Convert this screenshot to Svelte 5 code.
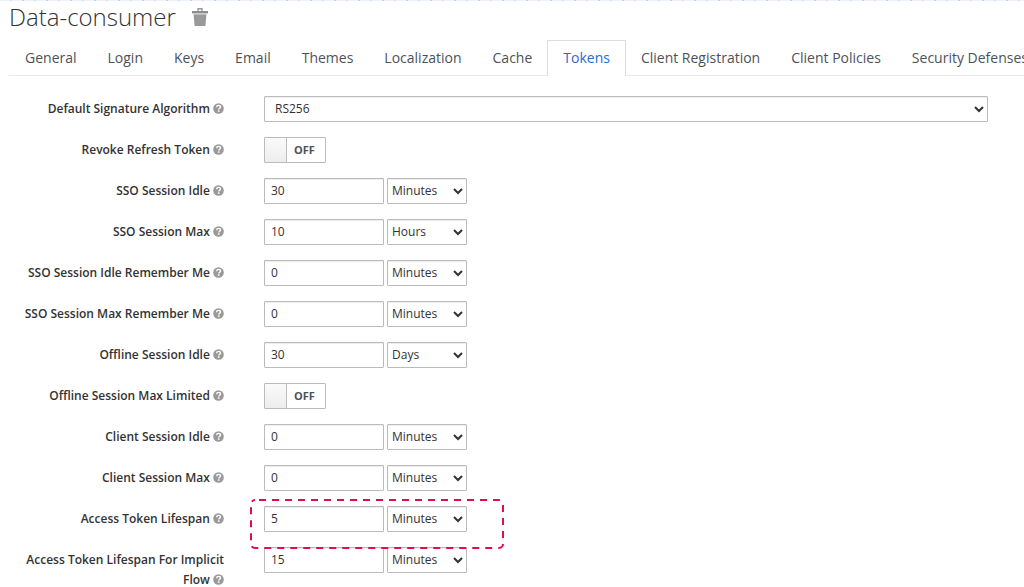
<script>
  const tabs = [
    'General', 'Login', 'Keys', 'Email', 'Themes', 'Localization', 'Cache',
    'Tokens', 'Client Registration', 'Client Policies', 'Security Defenses'
  ];
  const units = ['Minutes', 'Hours', 'Days'];

  let active = $state('Tokens');
  let algorithm = $state('RS256');
  let rows = $state([
    { id: 'revoke', label: 'Revoke Refresh Token', on: false },
    { id: 'sso-idle', label: 'SSO Session Idle', value: '30', unit: 'Minutes' },
    { id: 'sso-max', label: 'SSO Session Max', value: '10', unit: 'Hours' },
    { id: 'sso-idle-rm', label: 'SSO Session Idle Remember Me', value: '0', unit: 'Minutes' },
    { id: 'sso-max-rm', label: 'SSO Session Max Remember Me', value: '0', unit: 'Minutes' },
    { id: 'offline-idle', label: 'Offline Session Idle', value: '30', unit: 'Days' },
    { id: 'offline-limited', label: 'Offline Session Max Limited', on: false },
    { id: 'client-idle', label: 'Client Session Idle', value: '0', unit: 'Minutes' },
    { id: 'client-max', label: 'Client Session Max', value: '0', unit: 'Minutes' },
    { id: 'access', label: 'Access Token Lifespan', value: '5', unit: 'Minutes', marked: true },
    { id: 'implicit', label: 'Access Token Lifespan For Implicit Flow', value: '15', unit: 'Minutes' }
  ]);
</script>

{#snippet help()}
  <svg class="help" viewBox="0 0 11 11" aria-hidden="true">
    <circle cx="5.5" cy="5.5" r="5.3" fill="#999" />
    <path d="M3.6 4.2C3.7 2.9 4.6 2.4 5.6 2.4C6.7 2.4 7.5 3 7.5 4C7.5 5.3 5.7 5.2 5.7 6.6" fill="none" stroke="#fff" stroke-width="1.4" />
    <rect x="4.9" y="7.3" width="1.6" height="1.5" fill="#fff" />
  </svg>
{/snippet}

<main>
  <header>
    <h1>Data-consumer</h1>
    <button class="trash" aria-label="Delete realm">
      <svg viewBox="0 0 16 18" aria-hidden="true">
        <path d="M6 3V0.7H10V3" fill="none" stroke="#999" stroke-width="1.4" />
        <rect x="0" y="3" width="16" height="2.4" fill="#8f8f8f" />
        <path d="M1.5 5.4H14.5V6.6H1.6Z" fill="#c4c4c4" />
        <path d="M1.6 6.6H14.4L13.4 18H2.6Z" fill="#999" />
      </svg>
    </button>
  </header>

  <nav>
    {#each tabs as tab}
      <a href="#{tab}" class:active={active === tab} onclick={() => (active = tab)}>{tab}</a>
    {/each}
  </nav>

  <form>
    <div class="row">
      <label for="algorithm">Default Signature Algorithm {@render help()}</label>
      <select id="algorithm" class="wide" bind:value={algorithm}>
        <option>RS256</option>
        <option>ES256</option>
      </select>
    </div>
    {#each rows as row}
      <div class="row">
        <label for={row.id}>{row.label} {@render help()}</label>
        {#if row.unit}
          <div class="time">
            <input id={row.id} type="text" bind:value={row.value} />
            <select aria-label="{row.label} unit" bind:value={row.unit}>
              {#each units as unit}<option>{unit}</option>{/each}
            </select>
            {#if row.marked}
              <svg class="mark" aria-hidden="true">
                <rect x="1" y="1" rx="4" />
              </svg>
            {/if}
          </div>
        {:else}
          <button type="button" id={row.id} class="switch" class:on={row.on} onclick={() => (row.on = !row.on)}>
            <span class="knob"></span><span class="state">{row.on ? 'ON' : 'OFF'}</span>
          </button>
        {/if}
      </div>
    {/each}
  </form>
</main>

<style>
  :global(body) {
    margin: 0;
    background: #fff;
    overflow-x: hidden;
  }

  main {
    font: 12px/20px "Open Sans", "Noto Sans", sans-serif;
    color: #333;
    padding-left: 9px;
    background: repeating-linear-gradient(90deg, #edf2f8 0 10px, #dde2e8 10px 12px, #edf2f8 12px 22px, #c3cfe2 22px 24px) top / 100% 1px no-repeat;
  }

  header {
    display: flex;
    align-items: center;
    gap: 16px;
    height: 34px;
  }

  h1 {
    margin: 0;
    font-size: 24px;
    font-weight: 300;
    line-height: 34px;
  }

  .trash {
    padding: 0;
    border: 0;
    background: none;
    height: 18px;
  }

  .trash svg {
    display: block;
    width: 16px;
    height: 18px;
  }

  nav {
    display: flex;
    margin-top: 6px;
    border-bottom: 1px solid #e9e9e9;
  }

  nav a {
    flex: none;
    padding: 6px 15px 7px;
    margin: 0 -1px -1px 0;
    border: 1px solid transparent;
    border-bottom: 0;
    font-size: 14px;
    line-height: 22px;
    color: #4d5258;
    text-decoration: none;
  }

  nav a.active {
    color: #2a6bd0;
    background: #fff;
    border-color: #ddd;
  }

  form {
    display: grid;
    gap: 15px;
    padding: 20px 36px 0 0;
  }

  .row {
    display: grid;
    grid-template-columns: 215px minmax(0, 1fr);
    column-gap: 40px;
    align-items: start;
    min-height: 26px;
  }

  label {
    padding-top: 3px;
    text-align: right;
    font-weight: 600;
  }

  .help {
    width: 11px;
    height: 11px;
    vertical-align: -1px;
  }

  input,
  select {
    box-sizing: border-box;
    height: 26px;
    margin: 0;
    border: 1px solid #bbb;
    border-radius: 1px;
    background-color: #fff;
    box-shadow: inset 0 1px 1px rgba(0, 0, 0, 0.075);
    color: #333;
    font: inherit;
  }

  input {
    width: 120px;
    padding: 0 6px 2px;
  }

  select {
    width: 80px;
    padding: 0 0 2px;
  }

  select.wide {
    width: 100%;
    padding-left: 6px;
  }

  .time {
    position: relative;
    display: flex;
    gap: 3px;
    justify-self: start;
  }

  .mark {
    position: absolute;
    top: -7px;
    left: -14px;
    width: 254px;
    height: 50px;
    pointer-events: none;
    z-index: 1;
  }

  .mark rect {
    width: calc(100% - 2px);
    height: calc(100% - 2px);
    fill: none;
    stroke: #e00b52;
    stroke-width: 2;
    stroke-dasharray: 7 6;
    stroke-dashoffset: -4;
  }

  .switch {
    display: flex;
    justify-self: start;
    box-sizing: border-box;
    width: 62px;
    height: 26px;
    padding: 0;
    border: 1px solid #bbb;
    border-radius: 1px;
    background: #fff;
    color: #4d5258;
    font: 700 11px/24px "Open Sans", "Noto Sans", sans-serif;
  }

  .switch.on {
    flex-direction: row-reverse;
  }

  .knob {
    width: 21px;
    height: 24px;
    border-right: 1px solid #bbb;
    background: linear-gradient(#fafafa, #ededed);
  }

  .state {
    flex: 1;
    padding-right: 3px;
    text-align: center;
  }
</style>
